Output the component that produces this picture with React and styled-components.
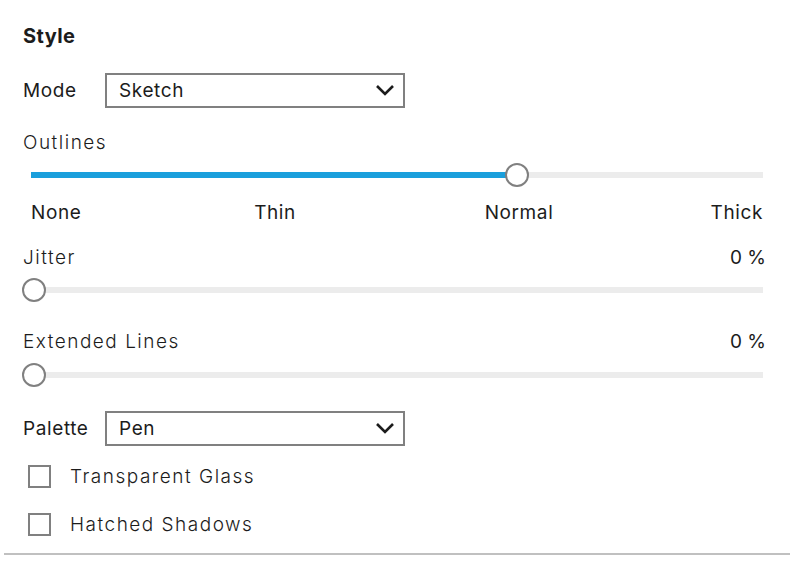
import React from "react";
import styled, { createGlobalStyle } from "styled-components";

const Global = createGlobalStyle`
  html, body { margin: 0; padding: 0; background: #fff; }
  body { font-family: Inter, "Noto Sans", sans-serif; color: #1c1c1c; letter-spacing: 0.6px; }
`;

const Panel = styled.div`
  width: 795px;
  height: 566px;
  box-sizing: border-box;
  padding: 0 4px;
  display: flex;
  flex-direction: column;
`;

const Content = styled.div`
  padding: 22px 28px 0 19px;
  display: flex;
  flex-direction: column;
`;

const Heading = styled.div`
  font-size: 20px;
  font-weight: 700;
  letter-spacing: 0.4px;
  height: 28px;
  line-height: 28px;
  margin-bottom: 23px;
`;

const FieldRow = styled.div`
  display: flex;
  align-items: center;
  height: 35px;
  margin-bottom: ${(p) => p.$mb || 0}px;
`;

const FieldLabel = styled.span`
  width: 82px;
  font-size: 19px;
  font-weight: 400;
`;

const Select = styled.div`
  width: 300px;
  height: 35px;
  box-sizing: border-box;
  border: 2px solid #808080;
  display: flex;
  align-items: center;
  justify-content: space-between;
  padding: 0 8px 0 12px;
  font-size: 19px;
`;

const SliderHeader = styled.div`
  display: flex;
  justify-content: space-between;
  align-items: center;
  height: 26px;
  font-size: 19px;
  font-weight: 300;
  letter-spacing: 1.5px;
  margin-top: ${(p) => p.$mt || 0}px;
  margin-bottom: ${(p) => p.$mb || 0}px;
`;

const Value = styled.span`
  font-weight: 400;
  letter-spacing: 0;
  margin-right: -3px;
`;

const SliderBox = styled.div`
  position: relative;
  height: 24px;
  margin-left: 8px;
`;

const Track = styled.div`
  position: absolute;
  left: 0;
  right: 0;
  top: 9px;
  height: 6px;
  background: #ececec;
`;

const Fill = styled.div`
  position: absolute;
  left: 0;
  top: 9px;
  height: 6px;
  background: #1a9fdc;
`;

const Thumb = styled.div`
  position: absolute;
  top: 0;
  width: 24px;
  height: 24px;
  box-sizing: border-box;
  margin-left: -12px;
  border-radius: 50%;
  border: 2px solid #808080;
  background: #fff;
`;

const Ticks = styled.div`
  position: relative;
  height: 26px;
  margin: 14px 0 0 8px;
  font-size: 19px;
`;

const Tick = styled.span`
  position: absolute;
  top: 0;
  white-space: nowrap;
  transform: translateX(${(p) => p.$shift}%);
`;

const CheckRow = styled.label`
  display: flex;
  align-items: center;
  height: 24px;
  padding-left: 5px;
  margin-bottom: ${(p) => p.$mb || 0}px;
  font-size: 19px;
  font-weight: 300;
  letter-spacing: 1.5px;
`;

const Box = styled.span`
  width: 23px;
  height: 23px;
  box-sizing: border-box;
  border: 2px solid #808080;
  margin-right: 19px;
`;

const Divider = styled.div`
  margin-top: auto;
  margin-bottom: 11px;
  height: 2px;
  background: #c0c0c0;
  margin-right: 1px;
`;

const Chevron = () => (
  <svg width="20" height="13" viewBox="0 0 20 13">
    <polyline points="2,2 10,10 18,2" fill="none" stroke="#1c1c1c" strokeWidth="2.6" />
  </svg>
);

const THUMB_MIN = 3;
const THUMB_RANGE = 724;

function Slider({ frac, fill }) {
  const x = THUMB_MIN + frac * THUMB_RANGE;
  return (
    <SliderBox>
      <Track />
      {fill && <Fill style={{ width: x }} />}
      <Thumb style={{ left: x }} />
    </SliderBox>
  );
}

const ticks = ["None", "Thin", "Normal", "Thick"];

export default function App() {
  return (
    <>
      <Global />
      <Panel>
        <Content>
          <Heading>Style</Heading>
          <FieldRow $mb={21}>
            <FieldLabel>Mode</FieldLabel>
            <Select>
              Sketch
              <Chevron />
            </Select>
          </FieldRow>
          <SliderHeader $mb={8}>Outlines</SliderHeader>
          <Slider frac={2 / 3} fill />
          <Ticks>
            {ticks.map((t, i) => {
              const f = i / (ticks.length - 1);
              const shift = i === 0 ? 0 : i === ticks.length - 1 ? -100 : -50;
              return (
                <Tick key={t} $shift={shift} style={{ left: `${f * 100}%` }}>
                  {t}
                </Tick>
              );
            })}
          </Ticks>
          <SliderHeader $mt={17} $mb={8}>
            Jitter<Value>0 %</Value>
          </SliderHeader>
          <Slider frac={0} />
          <SliderHeader $mt={26} $mb={9}>
            Extended Lines<Value>0 %</Value>
          </SliderHeader>
          <Slider frac={0} />
          <FieldRow style={{ marginTop: 24 }} $mb={18}>
            <FieldLabel>Palette</FieldLabel>
            <Select>
              Pen
              <Chevron />
            </Select>
          </FieldRow>
          <CheckRow $mb={24}>
            <Box />
            Transparent Glass
          </CheckRow>
          <CheckRow>
            <Box />
            Hatched Shadows
          </CheckRow>
        </Content>
        <Divider />
      </Panel>
    </>
  );
}
